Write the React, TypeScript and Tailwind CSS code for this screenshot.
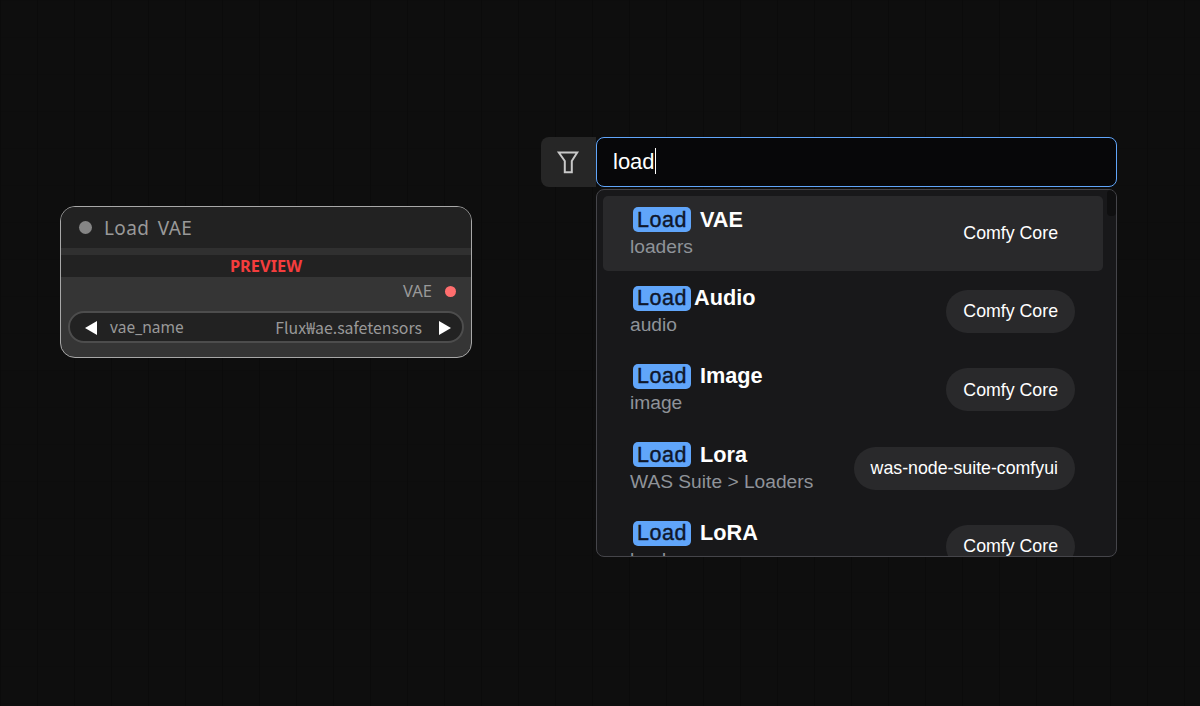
const results = [
  { rest: 'VAE', gap: true, category: 'loaders', source: 'Comfy Core', active: true },
  { rest: 'Audio', gap: false, category: 'audio', source: 'Comfy Core' },
  { rest: 'Image', gap: true, category: 'image', source: 'Comfy Core' },
  { rest: 'Lora', gap: true, category: 'WAS Suite > Loaders', source: 'was-node-suite-comfyui' },
  { rest: 'LoRA', gap: true, category: 'loaders', source: 'Comfy Core' },
];

function ResultRow({ rest, gap, category, source, active }: { rest: string; gap: boolean; category: string; source: string; active?: boolean }) {
  return (
    <div className={`flex h-[75.33px] shrink-0 items-center justify-between rounded-[5px] pl-[27px] pr-[28px] ${active ? 'bg-[#29292b]' : ''}`}>
      <div className="-mt-[2px] flex flex-col">
        <div className="flex h-[28px] items-center pl-[3px] text-[21.7px] font-bold leading-[26px] text-white">
          <span className="flex h-[25px] w-[58px] items-center justify-center rounded-[5px] bg-[#60a5fa] text-[21.5px] font-normal tracking-[0.5px] text-[#0f172a] [-webkit-text-stroke:0.4px_#0f172a]">Load</span>
          <span className={gap ? 'ml-[9px]' : 'ml-[3px]'}>{rest}</span>
        </div>
        <div className="text-[19.2px] leading-[25px] text-[#8f9399]">{category}</div>
      </div>
      <div className={`flex h-[43px] items-center rounded-full px-[17px] text-[17.75px] text-white ${active ? '' : 'bg-[#29292b]'}`}>{source}</div>
    </div>
  );
}

export default function App() {
  return (
    <div className="relative h-[706px] w-[1200px] overflow-hidden bg-[#0e0e0e] bg-[linear-gradient(to_right,#0b0b0b_1px,transparent_1px),linear-gradient(to_bottom,#0d0d0d_1px,transparent_1px)] bg-[size:37px_37px]">
      {/* Node */}
      <div className="absolute left-[60px] top-[206px] flex h-[152px] w-[412px] flex-col overflow-hidden rounded-[15px] border border-[#a8a8a8] bg-[#353535] font-['Noto_Sans','Open_Sans',sans-serif]">
        <div className="flex h-[41px] shrink-0 items-center bg-[#222222] pl-[18px]">
          <span className="size-[13px] rounded-full bg-[#858585]" />
          <span className="ml-[12px] mt-[1px] text-[19px] tracking-[0.4px] text-[#999999] [word-spacing:3px]">Load VAE</span>
        </div>
        <div className="h-[7px] shrink-0 bg-[#303030]" />
        <div className="flex h-[22px] shrink-0 items-center justify-center bg-[#222222] text-[16.4px] font-bold text-[#f53d3d]">PREVIEW</div>
        <div className="flex h-[28px] shrink-0 items-center justify-end pr-[15px] text-[16.5px] text-[#999999]">
          <span>VAE</span>
          <span className="ml-[13px] size-[11px] rounded-full bg-[#ff6e6e]" />
        </div>
        <div className="mx-[7px] mt-[6px] flex h-[32px] items-center rounded-full border-2 border-[#4d4d4d] bg-[#222222] pl-[15px] pr-[11px] pt-[1px] text-[15.5px] text-[#999999]">
          <svg width="13" height="14" viewBox="0 0 13 14" className="mt-[1px] shrink-0"><path d="M12 0V14L0 7Z" fill="#fff" /></svg>
          <span className="ml-[12px]">vae_name</span>
          <span className="ml-auto mr-[16px] font-['Noto_Sans_CJK_KR','Noto_Sans',sans-serif] text-[15.9px]">Flux₩ae.safetensors</span>
          <svg width="13" height="14" viewBox="0 0 13 14" className="mt-[1px] shrink-0"><path d="M1 0V14L13 7Z" fill="#fff" /></svg>
        </div>
      </div>

      {/* Search */}
      <div className="absolute left-[541px] top-[137px] w-[576px] font-['Liberation_Sans',Arial,sans-serif]">
        <div className="flex h-[50px]">
          <button className="flex w-[55px] items-center justify-center rounded-l-[8px] bg-[#262626]">
            <svg width="24" height="24" viewBox="0 0 24 24" fill="none" stroke="#c8c8c8" strokeWidth="2" strokeLinejoin="miter" className="-ml-[1px]">
              <path d="M2.8 2.5H21.2L15.8 11V22.2H8.8V11Z" />
            </svg>
          </button>
          <div className="flex flex-1 items-center rounded-[8px] border border-[#60a5fa] bg-[#070709] pb-[2px] pl-[16px] text-[22px] text-white">
            load<span className="h-[26px] w-px bg-white" />
          </div>
        </div>
        <div className="relative ml-[55px] mt-[2px] h-[368px] overflow-hidden rounded-[8px] border border-[#45454a] bg-[#18181a]">
          <div className="absolute right-0 top-0 h-[26px] w-[9px] rounded-[4px] bg-[#0f0f10]" />
          <div className="flex h-full flex-col gap-[3px] pl-[6px] pr-[13px] pt-[5.6px]">
            {results.map(r => <ResultRow key={r.rest} {...r} />)}
          </div>
        </div>
      </div>
    </div>
  );
}
